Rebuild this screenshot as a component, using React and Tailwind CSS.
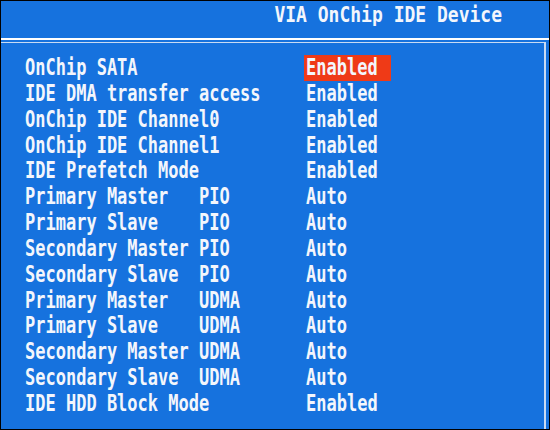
const rows = [
  { label: "OnChip SATA", value: "Enabled", active: true },
  { label: "IDE DMA transfer access", value: "Enabled" },
  { label: "OnChip IDE Channel0", value: "Enabled" },
  { label: "OnChip IDE Channel1", value: "Enabled" },
  { label: "IDE Prefetch Mode", value: "Enabled" },
  { label: "Primary Master   PIO", value: "Auto" },
  { label: "Primary Slave    PIO", value: "Auto" },
  { label: "Secondary Master PIO", value: "Auto" },
  { label: "Secondary Slave  PIO", value: "Auto" },
  { label: "Primary Master   UDMA", value: "Auto" },
  { label: "Primary Slave    UDMA", value: "Auto" },
  { label: "Secondary Master UDMA", value: "Auto" },
  { label: "Secondary Slave  UDMA", value: "Auto" },
  { label: "IDE HDD Block Mode", value: "Enabled" },
];

function App() {
  return (
    <div className="w-[550px] h-[430px] border border-black bg-[#1672de] flex flex-col overflow-hidden font-['DejaVu_Sans_Mono','Liberation_Mono',monospace] font-bold text-[#f3f6fc]">
      <div className="h-[37px] flex justify-end items-start pr-[47px] pt-[3px]">
        <span className="text-[18px] leading-[22px] scale-y-[1.2] inline-block whitespace-pre">
          VIA OnChip IDE Device
        </span>
      </div>
      <div className="h-[2px] bg-white" />
      <div className="h-[2px]" />
      <div className="flex-1 border-t border-r-2 border-[#c9dbf3] mr-[3px] pt-[12px] pl-[24px]">
        {rows.map((row) => (
          <div
            key={row.label}
            className="h-[25.85px] flex items-center text-[17px] scale-y-[1.3] whitespace-pre"
          >
            <span className="w-[279px] shrink-0">{row.label}</span>
            <span
              className={
                row.active
                  ? "bg-[#ef3a17] w-[87px] h-[20px] flex items-center pl-[2px]"
                  : "pl-[2px]"
              }
            >
              {row.value}
            </span>
          </div>
        ))}
      </div>
    </div>
  );
}

export default App;
